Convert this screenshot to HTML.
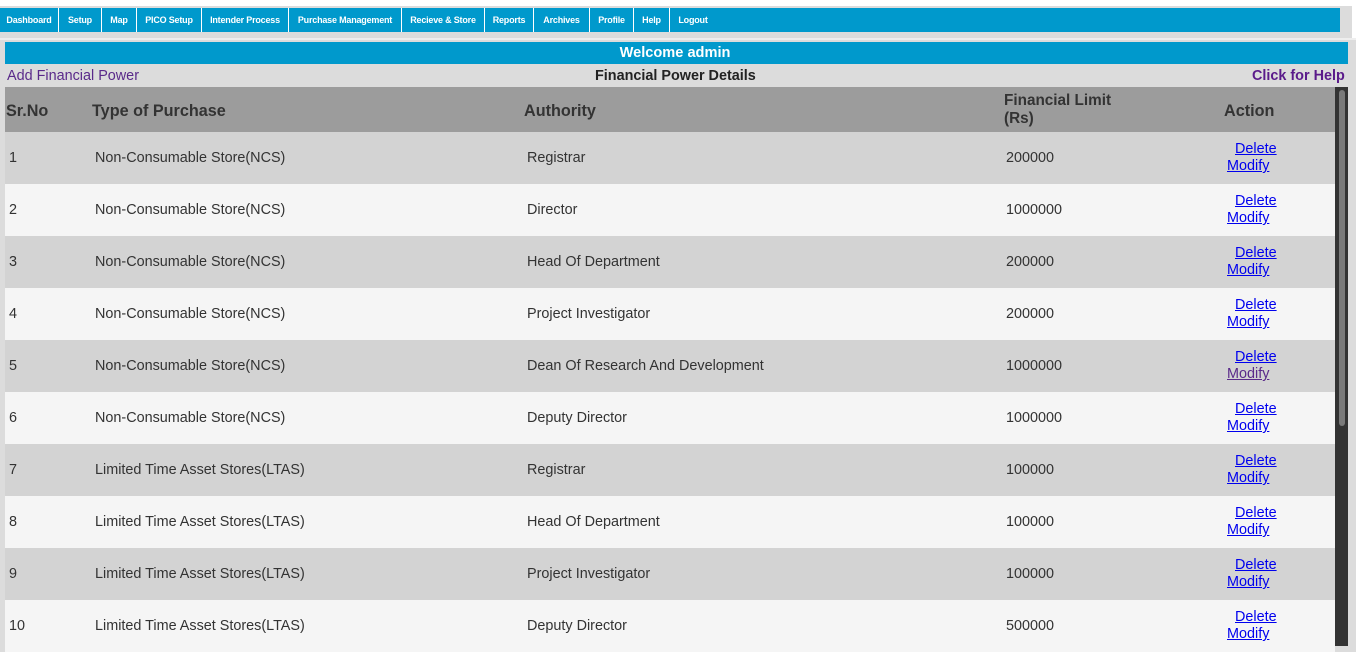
<!DOCTYPE html>
<html><head><style>
*{margin:0;padding:0;box-sizing:border-box}
body{width:1356px;height:646px;overflow:hidden;background:#dcdcdc;font-family:"Liberation Sans",sans-serif;position:relative}
.a{position:absolute}
#nav{left:0;top:8px;width:1340px;height:24px;background:#0099cc;display:flex}
#nav div{color:#fff;font-size:9px;font-weight:bold;height:24px;line-height:24px;border-right:1px solid #fff;text-align:center;letter-spacing:-0.2px}
.row{position:absolute;left:5px;width:1330px;height:52px;font-size:14.4px;color:#333}
.row span{position:absolute;top:18px}
.l{color:#0000ee;text-decoration:underline;font-size:14.4px;position:absolute}
</style></head><body>
<div class="a" style="left:0;top:0;width:1356px;height:6px;background:#fff"></div>
<div class="a" style="left:1352px;top:0;width:4px;height:38px;background:#fff"></div>
<div class="a" style="left:0;top:38px;width:1356px;height:2px;background:#eee"></div>
<div id="nav" class="a">
<div style="width:59px">Dashboard</div><div style="width:43px">Setup</div><div style="width:35px">Map</div><div style="width:65px">PICO Setup</div><div style="width:87px">Intender Process</div><div style="width:113px">Purchase Management</div><div style="width:83px">Recieve &amp; Store</div><div style="width:49px">Reports</div><div style="width:56px">Archives</div><div style="width:44px">Profile</div><div style="width:36px">Help</div><div style="width:46px;border:none">Logout</div>
</div>
<div class="a" style="left:5px;top:42px;width:1343px;height:22px;background:#0099cc;color:#fff;font-weight:bold;font-size:14.6px;text-align:center;line-height:23px;padding-right:3px">Welcome admin</div>
<div class="a" style="left:7px;top:68px;font-size:14.4px;color:#5a2a8a">Add Financial Power</div>
<div class="a" style="left:595px;top:68px;font-size:14.4px;font-weight:bold;color:#222">Financial Power Details</div>
<div class="a" style="left:1252px;top:68px;font-size:14.4px;font-weight:bold;color:#5a1a8a">Click for Help</div>
<div class="a" style="left:5px;top:87px;width:1330px;height:45px;background:#9c9c9c;color:#333;font-weight:bold;font-size:16.2px">
<span class="a" style="left:1px;top:15px">Sr.No</span>
<span class="a" style="left:87px;top:15px">Type of Purchase</span>
<span class="a" style="left:519px;top:15px">Authority</span>
<span class="a" style="left:999px;top:5px;font-size:15.3px;line-height:18px">Financial Limit<br>(Rs)</span>
<span class="a" style="left:1219px;top:15px">Action</span>
</div>
<div class="a" style="left:1335px;top:87px;width:13px;height:559px;background:#333"></div>
<div class="a" style="left:1339px;top:90px;width:6px;height:336px;background:#7a7a7a;border-radius:3px"></div>
<div id="rows"></div>
<script>
var d=[["1","Non-Consumable Store(NCS)","Registrar","200000"],["2","Non-Consumable Store(NCS)","Director","1000000"],["3","Non-Consumable Store(NCS)","Head Of Department","200000"],["4","Non-Consumable Store(NCS)","Project Investigator","200000"],["5","Non-Consumable Store(NCS)","Dean Of Research And Development","1000000"],["6","Non-Consumable Store(NCS)","Deputy Director","1000000"],["7","Limited Time Asset Stores(LTAS)","Registrar","100000"],["8","Limited Time Asset Stores(LTAS)","Head Of Department","100000"],["9","Limited Time Asset Stores(LTAS)","Project Investigator","100000"],["10","Limited Time Asset Stores(LTAS)","Deputy Director","500000"]];
var h="";d.forEach(function(r,i){var t=132+i*52;
h+='<div class="row" style="top:'+t+'px;background:'+(i%2?'#f5f5f5':'#d3d3d3')+'"><span style="left:4px">'+r[0]+'</span><span style="left:90px">'+r[1]+'</span><span style="left:522px">'+r[2]+'</span><span style="left:1001px">'+r[3]+'</span><a class="l" style="left:1230px;top:9px">Delete</a><a class="l" style="left:1222px;top:26px;'+(i==4?'color:#5a2a8a':'')+'">Modify</a></div>';});
document.getElementById("rows").innerHTML=h;
</script>
</body></html>
